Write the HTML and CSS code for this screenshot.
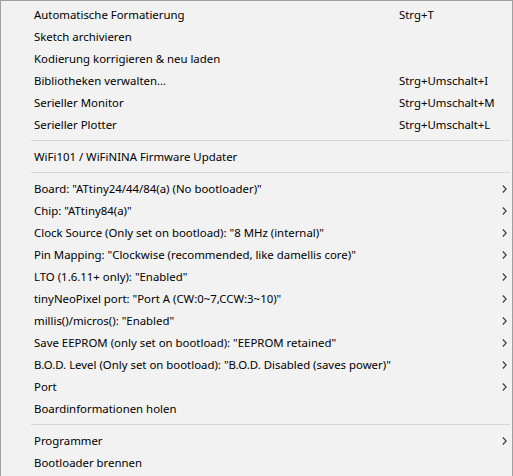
FILE: index.html
```html
<!DOCTYPE html>
<html lang="de">
<head>
    <meta charset="UTF-8">
    <title>Werkzeuge</title>
    <link rel="stylesheet" href="styles.css">
</head>
<body>
<div class="menu">
    <div class="item"><span class="label">Automatische Formatierung</span><span class="key">Strg+T</span><span></span></div>
    <div class="item"><span class="label">Sketch archivieren</span><span class="key"></span><span></span></div>
    <div class="item"><span class="label">Kodierung korrigieren &amp; neu laden</span><span class="key"></span><span></span></div>
    <div class="item"><span class="label">Bibliotheken verwalten...</span><span class="key">Strg+Umschalt+I</span><span></span></div>
    <div class="item"><span class="label">Serieller Monitor</span><span class="key">Strg+Umschalt+M</span><span></span></div>
    <div class="item"><span class="label">Serieller Plotter</span><span class="key">Strg+Umschalt+L</span><span></span></div>

    <div class="sep"></div>

    <div class="item"><span class="label">WiFi101 / WiFiNINA Firmware Updater</span><span class="key"></span><span></span></div>

    <div class="sep"></div>

    <div class="item sub"><span class="label">Board: "ATtiny24/44/84(a) (No bootloader)"</span><span class="key"></span><span class="arrow"><svg width="5" height="8" viewBox="0 0 5 8"><path d="M0.8 0.5 L4.2 4 L0.8 7.5"/></svg></span></div>
    <div class="item sub"><span class="label">Chip: "ATtiny84(a)"</span><span class="key"></span><span class="arrow"><svg width="5" height="8" viewBox="0 0 5 8"><path d="M0.8 0.5 L4.2 4 L0.8 7.5"/></svg></span></div>
    <div class="item sub"><span class="label">Clock Source (Only set on bootload): "8 MHz (internal)"</span><span class="key"></span><span class="arrow"><svg width="5" height="8" viewBox="0 0 5 8"><path d="M0.8 0.5 L4.2 4 L0.8 7.5"/></svg></span></div>
    <div class="item sub"><span class="label">Pin Mapping: "Clockwise (recommended, like damellis core)"</span><span class="key"></span><span class="arrow"><svg width="5" height="8" viewBox="0 0 5 8"><path d="M0.8 0.5 L4.2 4 L0.8 7.5"/></svg></span></div>
    <div class="item sub"><span class="label">LTO (1.6.11+ only): "Enabled"</span><span class="key"></span><span class="arrow"><svg width="5" height="8" viewBox="0 0 5 8"><path d="M0.8 0.5 L4.2 4 L0.8 7.5"/></svg></span></div>
    <div class="item sub"><span class="label">tinyNeoPixel port: "Port A (CW:0~7,CCW:3~10)"</span><span class="key"></span><span class="arrow"><svg width="5" height="8" viewBox="0 0 5 8"><path d="M0.8 0.5 L4.2 4 L0.8 7.5"/></svg></span></div>
    <div class="item sub"><span class="label">millis()/micros(): "Enabled"</span><span class="key"></span><span class="arrow"><svg width="5" height="8" viewBox="0 0 5 8"><path d="M0.8 0.5 L4.2 4 L0.8 7.5"/></svg></span></div>
    <div class="item sub"><span class="label">Save EEPROM (only set on bootload): "EEPROM retained"</span><span class="key"></span><span class="arrow"><svg width="5" height="8" viewBox="0 0 5 8"><path d="M0.8 0.5 L4.2 4 L0.8 7.5"/></svg></span></div>
    <div class="item sub"><span class="label">B.O.D. Level (Only set on bootload): "B.O.D. Disabled (saves power)"</span><span class="key"></span><span class="arrow"><svg width="5" height="8" viewBox="0 0 5 8"><path d="M0.8 0.5 L4.2 4 L0.8 7.5"/></svg></span></div>
    <div class="item sub"><span class="label">Port</span><span class="key"></span><span class="arrow"><svg width="5" height="8" viewBox="0 0 5 8"><path d="M0.8 0.5 L4.2 4 L0.8 7.5"/></svg></span></div>
    <div class="item"><span class="label">Boardinformationen holen</span><span class="key"></span><span></span></div>

    <div class="sep"></div>

    <div class="item sub"><span class="label">Programmer</span><span class="key"></span><span class="arrow"><svg width="5" height="8" viewBox="0 0 5 8"><path d="M0.8 0.5 L4.2 4 L0.8 7.5"/></svg></span></div>
    <div class="item"><span class="label">Bootloader brennen</span><span class="key"></span><span></span></div>
</div>
</body>
</html>
```
FILE: styles.css
```css
body {
    margin: 0;
    padding: 0;
    font-family: "Noto Sans", "Open Sans", sans-serif;
    font-size: 11.4px;
    color: #000;
}

.menu {
    width: 511px;
    height: 474px;
    border: 1px solid #a0a0a0;
    background-color: #f2f2f2;
    padding-top: 3px;
    box-sizing: content-box;
}

.item {
    display: grid;
    grid-template-columns: 365px 1fr 12px;
    align-items: center;
    height: 22px;
    line-height: 22px;
    padding-left: 33px;
    white-space: nowrap;
}

.arrow {
    display: flex;
    align-items: center;
    padding-left: 2px;
}

.arrow svg {
    fill: none;
    stroke: #3a3a3a;
    stroke-width: 1.1;
}

.sep {
    height: 1px;
    background-color: #d7d7d7;
    margin: 4px 2px 5px 30px;
}
```
